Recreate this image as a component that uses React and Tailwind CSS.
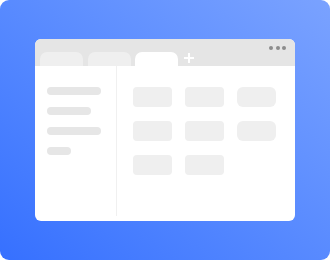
// Browser window illustration on a blue gradient card

const sideBars = ['w-[54px]', 'w-[44px]', 'w-[54px]', 'w-[24px]']

const cells = [
  'rounded-[4px]', 'rounded-[4px]', 'rounded-[6px]',
  'rounded-[4px]', 'rounded-[4px]', 'rounded-[6px]',
  'rounded-[4px]', 'rounded-[4px]',
]

export default function App() {
  return (
    <div className="w-[330px] h-[260px] rounded-[9px] bg-gradient-to-tr from-[#3670ff] to-[#7aa2ff] pt-[39px] pl-[35px]">
      <div className="w-[260px] h-[182px] rounded-[6px] bg-white overflow-hidden flex flex-col">
        {/* tab strip */}
        <div className="h-[27px] bg-[#e5e5e5] flex items-end pl-[5px] pr-[10px] relative">
          <div className="w-[43px] h-[14px] rounded-t-[7px] bg-[#efefef]" />
          <div className="w-[43px] h-[14px] rounded-t-[7px] bg-[#efefef] ml-[5px]" />
          <div className="w-[43px] h-[14px] rounded-t-[7px] bg-white ml-[4px]" />
          <svg className="ml-[6px] mb-[3px]" width="10" height="10" viewBox="0 0 10 10">
            <path d="M5 0v10M0 5h10" stroke="#fff" strokeWidth="2" />
          </svg>
          <div className="absolute right-[9px] top-[7px] flex gap-[2.5px]">
            <span className="w-[4px] h-[4px] rounded-full bg-[#8c8c8c]" />
            <span className="w-[4px] h-[4px] rounded-full bg-[#8c8c8c]" />
            <span className="w-[4px] h-[4px] rounded-full bg-[#8c8c8c]" />
          </div>
        </div>
        {/* body */}
        <div className="flex-1 flex">
          <div className="w-[81px] pt-[21px] pl-[12px] flex flex-col gap-[12px]">
            {sideBars.map((w, i) => (
              <div key={i} className={`${w} h-[8px] rounded-full bg-[#e6e6e6]`} />
            ))}
          </div>
          <div className="w-px bg-[#f0f0f0] mb-[5px]" />
          <div className="pt-[21px] pl-[16px]">
            <div className="grid grid-cols-[39px_39px_39px] gap-x-[13px] gap-y-[14px]">
              {cells.map((r, i) => (
                <div key={i} className={`h-[20px] ${r} bg-[#efefef]`} />
              ))}
            </div>
          </div>
        </div>
      </div>
    </div>
  )
}
